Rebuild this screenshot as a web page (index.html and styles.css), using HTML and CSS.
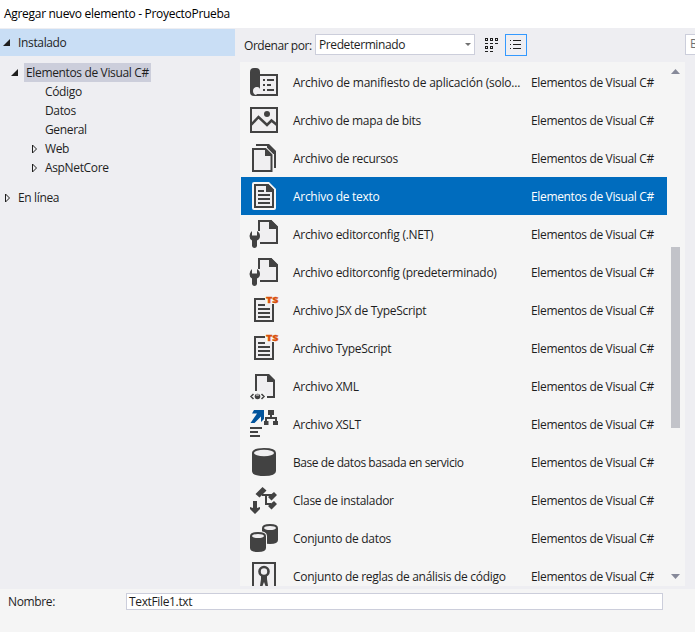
FILE: index.html
```html
<!DOCTYPE html>
<html lang="es">
<head>
<meta charset="utf-8">
<title>Agregar nuevo elemento - ProyectoPrueba</title>
<link rel="stylesheet" href="styles.css">
</head>
<body>
<header class="titlebar">Agregar nuevo elemento - ProyectoPrueba</header>
<main class="main">
  <nav class="sidebar">
    <div class="node section"><svg class="arrow" viewBox="0 0 8 8"><path d="M7 0V7H0z" fill="#1e1e1e"/></svg><span>Instalado</span></div>
    <div class="tree">
      <div class="node root"><svg class="arrow" viewBox="0 0 8 8"><path d="M7 0V7H0z" fill="#1e1e1e"/></svg><span class="picked">Elementos de Visual C#</span></div>
      <div class="node leaf"><span>Código</span></div>
      <div class="node leaf"><span>Datos</span></div>
      <div class="node leaf"><span>General</span></div>
      <div class="node branch"><svg class="arrow" viewBox="0 0 8 8"><path d="M1.500 0V8L5.500 4z" fill="none" stroke="#1e1e1e"/></svg><span>Web</span></div>
      <div class="node branch"><svg class="arrow" viewBox="0 0 8 8"><path d="M1.500 0V8L5.500 4z" fill="none" stroke="#1e1e1e"/></svg><span>AspNetCore</span></div>
    </div>
    <div class="node online"><svg class="arrow" viewBox="0 0 8 8"><path d="M1.500 0V8L5.500 4z" fill="none" stroke="#1e1e1e"/></svg><span>En línea</span></div>
  </nav>
  <section class="content">
    <div class="toolbar">
      <span class="sort-label">Ordenar por:</span>
      <div class="select"><span>Predeterminado</span><svg width="6" height="3" viewBox="0 0 6 3"><path d="M0 0h6L3 3z" fill="#717171"/></svg></div>
      <svg class="grid-icon" width="14" height="14" viewBox="0 0 14 14" shape-rendering="crispEdges"><path d="M.5 .5h2v2h-2zM5.500 .5h2v2h-2zM10.500 .5h2v2h-2zM.5 8.500h2v2h-2zM5.500 8.500h2v2h-2z" fill="none" stroke="#1e1e1e"/><path d="M0 5h3v1H0zM5 5h3v1H5zM10 5h3v1h-3zM0 13h3v1H0zM5 13h3v1H5z" fill="#1e1e1e"/></svg>
      <div class="view-button"><svg width="12" height="10" viewBox="0 0 12 10" shape-rendering="crispEdges"><path d="M0 0h1v1H0zM3 0h8v1H3zM0 4h1v1H0zM3 4h8v1H3zM0 8h1v1H0zM3 8h8v1H3z" fill="#1e1e1e"/></svg></div>
      <div class="search">B</div>
    </div>
    <div class="list-frame">
      <div class="list">
        <div class="item"><svg viewBox="0 0 32 32"><path d="M12 9h17v20H7" fill="#f0eff1" stroke="#424242" stroke-width="2"/><path d="M2 26V6q0-4 4-4h2q4 0 4 4v18q0-3-3-3t-3 3q0 2 2 2v4H6q-4 0-4-4z" fill="#424242"/><path d="M15 13h2v2h-2zM19 13h7v2h-7zM15 18h2v2h-2zM19 18h4v2h-4zM15 23h2v2h-2zM19 23h7v2h-7z" fill="#424242"/><path d="M5 25q0-3.500 3.500-3.500Q12 21.500 12 25H9q1 3-1 4-3-1-3-4z" fill="#f0eff1"/></svg><span class="name wide">Archivo de manifiesto de aplicación (solo...</span><span class="kind">Elementos de Visual C#</span></div>
        <div class="item"><svg viewBox="0 0 32 32"><path d="M3 4h26v24H3z" fill="#f0eff1" stroke="#424242" stroke-width="2"/><circle cx="19" cy="10" r="3" fill="#424242"/><path d="M3 21l7.500-8 8.500 8 4.500-4.500L29 21" fill="none" stroke="#424242" stroke-width="2.500"/></svg><span class="name">Archivo de mapa de bits</span><span class="kind">Elementos de Visual C#</span></div>
        <div class="item"><svg viewBox="0 0 32 32"><path d="M8 3h12l7 7v16" fill="none" stroke="#424242" stroke-width="2"/><path d="M19 2h2l7 7v3h-4l-5-5z" fill="#424242"/><path d="M5 7h12.500l6 6v16H5z" fill="#f0eff1" stroke="#f5f5f5" stroke-width="4"/><path d="M5 7h12.500l6 6v16H5z" fill="#f0eff1" stroke="#424242" stroke-width="2"/><path d="M17 6v8h7z" fill="#424242"/></svg><span class="name">Archivo de recursos</span><span class="kind">Elementos de Visual C#</span></div>
        <div class="item selected"><svg viewBox="0 0 32 32"><path d="M6 2h15l7 7v19q0 2-2 2H6q-2 0-2-2V4q0-2 2-2z" fill="#f6f6f6"/><path d="M7 5h13l5 5v17H7z" fill="#f0eff1" stroke="#424242" stroke-width="2"/><path d="M18 4h2l6 6v2h-8zM10 10h6v2h-6zM10 14h12v2H10zM10 18h12v2H10zM10 22h12v2H10z" fill="#424242"/></svg><span class="name">Archivo de texto</span><span class="kind">Elementos de Visual C#</span></div>
        <div class="item"><svg viewBox="0 0 32 32"><path d="M11 13V3h12l6 6v16H12V14z" fill="#f0eff1"/><path d="M11 13V3h12l6 6v16H12" fill="none" stroke="#424242" stroke-width="2"/><path d="M21 2h2l7 7v2h-9z" fill="#424242"/><path d="M4 13v4.500h5V13q3 1.500 3 5 0 3-3 4.500v5.500q-.5 2-2.500 2T4 28v-5.500Q1.500 21 1.500 18t2.500-5z" fill="#424242"/></svg><span class="name">Archivo editorconfig (.NET)</span><span class="kind">Elementos de Visual C#</span></div>
        <div class="item"><svg viewBox="0 0 32 32"><path d="M11 13V3h12l6 6v16H12V14z" fill="#f0eff1"/><path d="M11 13V3h12l6 6v16H12" fill="none" stroke="#424242" stroke-width="2"/><path d="M21 2h2l7 7v2h-9z" fill="#424242"/><path d="M4 13v4.500h5V13q3 1.500 3 5 0 3-3 4.500v5.500q-.5 2-2.500 2T4 28v-5.500Q1.500 21 1.500 18t2.500-5z" fill="#424242"/></svg><span class="name">Archivo editorconfig (predeterminado)</span><span class="kind">Elementos de Visual C#</span></div>
        <div class="item"><svg viewBox="0 0 32 32"><path d="M7 5h11v5h7v17H7z" fill="#f0eff1"/><path d="M17 5H7v22h18V10" fill="none" stroke="#424242" stroke-width="2"/><path d="M10 10h7v2h-7zM10 14h12v2H10zM10 18h12v2H10zM10 22h12v2H10z" fill="#424242"/><text x="18" y="9" textLength="12.500" lengthAdjust="spacingAndGlyphs" class="ts">TS</text></svg><span class="name">Archivo JSX de TypeScript</span><span class="kind">Elementos de Visual C#</span></div>
        <div class="item"><svg viewBox="0 0 32 32"><path d="M7 5h11v5h7v17H7z" fill="#f0eff1"/><path d="M17 5H7v22h18V10" fill="none" stroke="#424242" stroke-width="2"/><path d="M10 10h7v2h-7zM10 14h12v2H10zM10 18h12v2H10zM10 22h12v2H10z" fill="#424242"/><text x="18" y="9" textLength="12.500" lengthAdjust="spacingAndGlyphs" class="ts">TS</text></svg><span class="name">Archivo TypeScript</span><span class="kind">Elementos de Visual C#</span></div>
        <div class="item"><svg viewBox="0 0 32 32"><path d="M8 21V5h12l6 6v16h-7l-3-6z" fill="#f0eff1"/><path d="M8 21V5h12l6 6v16h-7" fill="none" stroke="#424242" stroke-width="2"/><path d="M19 4h2l6 6v2h-8z" fill="#424242"/><path d="M5.500 24L3 26.500 5.500 29M13.500 24l2.500 2.500-2.500 2.500" fill="none" stroke="#424242" stroke-width="1.500"/><circle cx="9.500" cy="26.500" r="2.800" fill="#424242"/><path d="M8 25h3" stroke="#f0eff1"/></svg><span class="name">Archivo XML</span><span class="kind">Elementos de Visual C#</span></div>
        <div class="item"><svg viewBox="0 0 32 32"><path d="M6 2h10v9l-3 3V8.500L6.500 15H2.500l6.500-9.500H4z" fill="#00539c"/><path d="M20 2h6v5h-2v2h5v4h1v4h-5v-4h2v-2h-8v2h1.500v4H16v-4h1V9h5V7h-2zM2 19h12v2H2zM2 23h8v2H2zM2 27h10v2H2z" fill="#424242"/></svg><span class="name">Archivo XSLT</span><span class="kind">Elementos de Visual C#</span></div>
        <div class="item"><svg viewBox="0 0 32 32"><path d="M4 7q0-5 12-5t12 5v18q0 5-12 5T4 25z" fill="#424242"/><ellipse cx="16" cy="7" rx="10" ry="3.200" fill="#f0eff1"/></svg><span class="name tight">Base de datos basada en servicio</span><span class="kind">Elementos de Visual C#</span></div>
        <div class="item"><svg viewBox="0 0 32 32"><path d="M14 11h10M18 11v9h5" fill="none" stroke="#424242" stroke-width="2"/><path d="M7.500 10l7-7 4 3.500-7 7zM20 13l6-5 3 3-5.500 5.500zM20 22l6-5 3 3-5.500 5.500zM5 17h4v7l3-1v2l-5 5-5-5v-2l3 1z" fill="#424242"/></svg><span class="name">Clase de instalador</span><span class="kind">Elementos de Visual C#</span></div>
        <div class="item"><svg viewBox="0 0 32 32"><path d="M14 6q0-4 8-4t8 4v12q0 4-8 4-8 0-8-4z" fill="#424242"/><ellipse cx="22" cy="6" rx="6" ry="2" fill="#f0eff1"/><path d="M2 14q0-4 8-4t8 4v12q0 4-8 4-8 0-8-4z" fill="#424242" stroke="#f5f5f5" stroke-width="2" paint-order="stroke"/><ellipse cx="10" cy="14" rx="6" ry="2" fill="#f0eff1"/></svg><span class="name">Conjunto de datos</span><span class="kind">Elementos de Visual C#</span></div>
        <div class="item"><svg viewBox="0 0 32 32"><path d="M5 3h22v28H5z" fill="#f0eff1" stroke="#424242" stroke-width="2"/><circle cx="16" cy="11.500" r="4.500" fill="none" stroke="#424242" stroke-width="2.600"/><path d="M13 15h6v4l1 7h-2.500L16 22l-1.500 4H12l1-7z" fill="#424242"/></svg><span class="name">Conjunto de reglas de análisis de código</span><span class="kind">Elementos de Visual C#</span></div>
      </div>
      <div class="scrollbar">
        <svg class="up" width="9" height="5" viewBox="0 0 9 5"><path d="M0 5h9L4.500 0z" fill="#868999"/></svg>
        <div class="thumb"></div>
        <svg class="down" width="9" height="5" viewBox="0 0 9 5"><path d="M0 0h9L4.500 5z" fill="#868999"/></svg>
      </div>
    </div>
  </section>
</main>
<footer class="footer"><span class="name-label">Nombre:</span><div class="input">TextFile1.txt</div></footer>
</body>
</html>
```
FILE: styles.css
```css
* { box-sizing: border-box; }
body {
  margin: 0;
  width: 695px;
  height: 632px;
  overflow: hidden;
  display: flex;
  flex-direction: column;
  background: #f5f5f5;
  color: #1e1e1e;
  font: 12px/18px "Open Sans", "Noto Sans", sans-serif;
  letter-spacing: -0.35px;
  white-space: nowrap;
}
svg { display: block; flex: none; }
.titlebar { height: 28px; padding: 5px 4px 0; background: #fff; color: #000; letter-spacing: -0.3px; }
.main { display: flex; height: 561px; background: #eeeef2; }
.sidebar { width: 235px; padding-top: 1px; }
.node { display: flex; align-items: center; height: 19px; }
.arrow { width: 8px; height: 8px; }
.section { height: 27px; padding-left: 3px; gap: 7px; background: #c9def5; }
.tree { padding-top: 7px; }
.root { padding-left: 11px; gap: 5px; }
.picked { height: 19px; padding: 1px 2px 0; background: #cccedb; }
.leaf { padding-left: 45px; }
.branch { padding-left: 31px; gap: 6px; }
.online { margin-top: 11px; padding-left: 4px; gap: 6px; }
.content { width: 460px; padding-left: 5px; }
.toolbar { display: flex; height: 34px; padding: 6px 0 0 4px; }
.toolbar > * { flex: none; }
.sort-label { width: 71px; padding-top: 3px; letter-spacing: -0.45px; }
.select { display: flex; align-items: center; justify-content: space-between; width: 160px; height: 21px; padding: 0 3px; border: 1px solid #cccedb; background: #fff; letter-spacing: -0.4px; }
.grid-icon { margin: 4px 0 0 10px; }
.view-button { display: flex; align-items: center; justify-content: center; width: 22px; height: 22px; margin-left: 6px; border: 1px solid #3399ff; }
.search { width: 20px; height: 21px; margin-left: 158px; padding-left: 4px; overflow: hidden; border: 1px solid #cccedb; background: #fff; color: #717171; }
.list-frame { display: flex; width: 445px; height: 524px; background: #f5f5f5; overflow: hidden; }
.list { width: 427px; padding: 1px 0 0 1px; }
.item { display: flex; align-items: center; height: 38px; padding-left: 7px; }
.item svg { width: 32px; height: 32px; }
.item span { padding-top: 1px; }
.name { flex: none; width: 251px; padding-left: 13px; letter-spacing: -0.29px; }
.name.wide { letter-spacing: -0.22px; }
.name.tight { letter-spacing: -0.44px; }
.selected { background: #006cbe; color: #fff; }
.ts { fill: #d9500b; stroke: #d9500b; stroke-width: 0.3px; font: 800 9px "Open Sans", sans-serif; letter-spacing: 0; }
.scrollbar { display: flex; flex-direction: column; align-items: center; width: 17px; padding: 7px 0 7px; }
.thumb { width: 9px; height: 181px; margin-top: 173px; background: #c2c3c9; }
.down { margin-top: auto; }
.footer { display: flex; height: 43px; padding: 4px 8px; }
.name-label { width: 118px; }
.input { width: 537px; height: 17px; padding-left: 2px; border: 1px solid #cccedb; background: #fff; line-height: 15px; }
```
